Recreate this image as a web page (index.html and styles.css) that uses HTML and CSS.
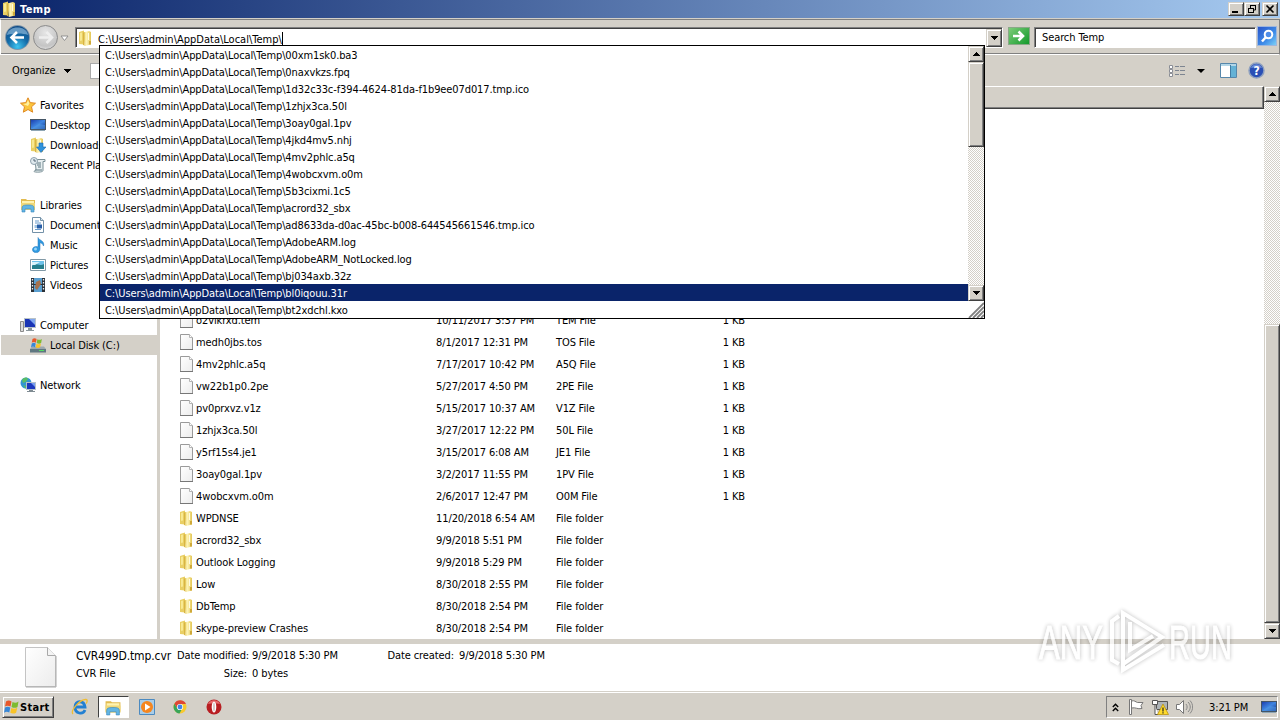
FILE: index.html
```html
<!DOCTYPE html>
<html lang="en">
<head>
    <meta charset="UTF-8">
    <meta name="viewport" content="width=device-width, initial-scale=1.0">
    <title>Temp</title>
    <link rel="stylesheet" href="styles.css">
</head>
<body>
    <!-- shared icons -->
    <svg class="sprite" width="0" height="0">
        <defs>
            <linearGradient id="gold" x1="0" x2="1"><stop offset="0" stop-color="#ecd467"/><stop offset=".45" stop-color="#fdf3b4"/><stop offset="1" stop-color="#e3c655"/></linearGradient>
            <linearGradient id="blue" x1="0" y1="0" x2="1" y2="1"><stop offset="0" stop-color="#1b3fb0"/><stop offset=".5" stop-color="#3f86e0"/><stop offset="1" stop-color="#0f2f8c"/></linearGradient>
            <linearGradient id="paper" x1="0" y1="0" x2="1" y2="1"><stop offset="0" stop-color="#fff"/><stop offset="1" stop-color="#ececec"/></linearGradient>
            <radialGradient id="navBlue" cx=".5" cy=".9" r=".9"><stop offset="0" stop-color="#3fc4f0"/><stop offset=".5" stop-color="#146ca8"/><stop offset="1" stop-color="#0f4a86"/></radialGradient>
            <radialGradient id="navGray" cx=".5" cy=".3" r=".8"><stop offset="0" stop-color="#e6e6e6"/><stop offset=".7" stop-color="#c4c4c4"/><stop offset="1" stop-color="#eee"/></radialGradient>
        </defs>
        <symbol id="folder" viewBox="0 0 16 16">
            <path d="M1 2l5-1.500v14L1 14z" fill="#e9cf64"/>
            <path d="M5 2.500l6-1.500 2 1v12.500L7 16z" fill="url(#gold)"/>
            <path d="M5 2.500l1.500-.5v14L5 14.500z" fill="#d9b541"/>
            <path d="M2 3l2-.5v8L2 11z" fill="#f8e992"/>
            <path d="M10 3h1v7h-1z" fill="#fffbe0"/>
            <path d="M11 11h2v3.500h-2z" fill="#cfa93a"/>
        </symbol>
        <symbol id="file" viewBox="0 0 16 16">
            <path d="M1.500.5h9l3 3v12h-12z" fill="url(#paper)" stroke="#9a9a9a"/>
            <path d="M10.500.5v3h3" fill="#fff" stroke="#b5b5b5"/>
            <path d="M1 15.500h13" stroke="#777"/>
        </symbol>
        <symbol id="monitor" viewBox="0 0 16 16">
            <path d="M0 2h16v11H0z" fill="#456"/>
            <path d="M1 3h14v9H1z" fill="url(#blue)"/>
            <path d="M1 12l8-5 6 1v4z" fill="#58a4ec" opacity=".5"/>
            <path d="M1 13h14v1H1z" fill="#8fa6b4"/>
        </symbol>
        <symbol id="libs" viewBox="0 0 16 16">
            <path d="M1 2h5l1 1h8v9H1z" fill="#e2bb50"/>
            <path d="M2 4h12v3H2z" fill="#fff3b0"/>
            <path d="M1 6h14v7H1z" fill="#f0d878"/>
            <path d="M2 15v-4c0-3 3-3 6-3s6 0 6 3v4h-3v-3H5v3z" fill="#62b5e4" stroke="#3987bd" stroke-width=".6"/>
        </symbol>
        <symbol id="flagwin" viewBox="0 0 16 16">
            <path d="M2 2.500c2-1.500 4-1 5.500 0L6.500 7.500c-2-1-4-1-5.500 0z" fill="#e8582a"/>
            <path d="M8.500 3c2 1 4 1 6-.5l-1 5.500c-2 1.300-4 1-6 0z" fill="#7dbb31"/>
            <path d="M1 8.500c2-1 3.500-1 5.300 0l-1 5c-2-1-3.500-1-5.300.2z" fill="#3787d6"/>
            <path d="M7.300 9c2 1 4 1 6-.3l-1.200 5c-2 1.200-4 1.200-5.800.1z" fill="#f8c327"/>
        </symbol>
        <symbol id="down" viewBox="0 0 7 4"><path d="M0 0h7v1H6v1H5v1H4v1H3V3H2V2H1V1H0z"/></symbol>
        <symbol id="up" viewBox="0 0 7 4"><path d="M3 0h1v1h1v1h1v1h1v1H0V3h1V2h1V1h1z"/></symbol>
    </svg>

    <header class="titlebar">
        <svg class="icon"><use href="#folder"/></svg>
        <h1>Temp</h1>
        <div class="winbtns">
            <span class="btn3d"><svg width="12" height="10" viewBox="0 0 12 10"><path d="M2 7h6v2H2z"/></svg></span>
            <span class="btn3d"><svg width="12" height="10" viewBox="0 0 12 10"><path d="M4 1.500h6M4.500 1v3M9.500 1v5H8M2 4.500h6M2.500 4v5M7.500 4v5M2 8.500h6" fill="none" stroke="#000"/><path d="M4 1h6v1H4zM2 4h6v1H2z"/></svg></span>
            <span class="btn3d close"><svg width="12" height="10" viewBox="0 0 12 10"><path d="M2.500 1.500l7 7M9.500 1.500l-7 7" stroke="#000" stroke-width="1.600"/></svg></span>
        </div>
    </header>

    <div class="addressbar">
        <svg class="navbtns" width="69" height="30" viewBox="0 0 69 30">
            <circle cx="17.500" cy="15.500" r="12.500" fill="#7f95a8"/>
            <circle cx="17.500" cy="15.500" r="11.500" fill="url(#navBlue)"/>
            <path d="M7 13c1-10 20-10 21 0-5-2-14-2-21 0z" fill="#9fc8e6" opacity=".6"/>
            <path d="M24 15.500H12M17 10l-5.500 5.500L17 21" fill="none" stroke="#fff" stroke-width="2.600"/>
            <circle cx="45.500" cy="15.500" r="12" fill="url(#navGray)" stroke="#8b8b8b"/>
            <path d="M39 15.500h12M46.500 10l5.500 5.500-5.500 5.500" fill="none" stroke="#eee" stroke-width="2.500"/>
            <path d="M61 14h7l-3.500 4.500z" fill="#fff" stroke="#888" stroke-width=".9"/>
        </svg>
        <div class="field address">
            <svg class="icon"><use href="#folder"/></svg>
            <span class="path">C:\Users\admin\AppData\Local\Temp\</span><i class="caret"></i>
            <span class="btn3d drop"><svg width="7" height="4"><use href="#down"/></svg></span>
        </div>
        <span class="go"><svg width="20" height="16" viewBox="0 0 20 16"><path d="M4 8h10M9.500 3.500L14 8l-4.500 4.500" fill="none" stroke="#fff" stroke-width="2.600"/></svg></span>
        <div class="field search">Search Temp</div>
        <span class="find"><svg width="18" height="18" viewBox="0 0 18 18"><circle cx="10.500" cy="7.500" r="3.800" fill="#4f8de8" stroke="#fff" stroke-width="2"/><path d="M8 10l-4 4.500" stroke="#fff" stroke-width="2.500"/></svg></span>
    </div>

    <div class="toolbar">
        <span>Organize</span>
        <svg class="arrow" width="7" height="4"><use href="#down"/></svg>
        <i class="openicon"></i>
        <div class="views">
            <svg width="16" height="14" viewBox="0 0 16 14"><path d="M.5 1.500h3v3h-3zM.5 5.500h3v3h-3zM.5 9.500h3v3h-3z" fill="#fff" stroke="#8b8e96"/><path d="M6 2.500h4M11 2.500h5M6 6.500h4M11 6.500h5M6 10.500h4M11 10.500h5" stroke="#7d8591"/></svg>
            <svg class="viewarrow" width="8" height="4"><use href="#down"/></svg>
            <svg class="preview" width="17" height="15" viewBox="0 0 17 15"><path d="M.5.5h16v14H.5z" fill="#fff" stroke="#5687ab"/><path d="M1 1h15v2H1z" fill="#b2d6e8"/><path d="M11 3h5v11h-5z" fill="#64b2d6"/><path d="M10.500 2v12" stroke="#427ca4"/></svg>
            <svg width="17" height="17" viewBox="0 0 17 17"><circle cx="8.500" cy="8.500" r="7.500" fill="#2a4fb5" stroke="#8ea0bf" stroke-width="1.500"/><path d="M3 6c2-5 9-5 11 0-4-1-7-1-11 0z" fill="#83a4e6" opacity=".7"/><text class="qmark" x="8.500" y="13" text-anchor="middle">?</text></svg>
        </div>
    </div>

    <main>
        <nav>
            <div class="nav-item top"><svg class="icon" viewBox="0 0 16 16"><path d="M8 .8l2.200 4.800 5.300.6-4 3.600 1.200 5.400L8 12.500l-4.700 2.700 1.200-5.400-4-3.600 5.300-.6z" fill="#fbc53c" stroke="#e08a24"/><path d="M8 3l1.400 3.500L8 9 3 7l3.500-.6z" fill="#fff0a0"/></svg>Favorites</div>
            <div class="nav-item"><svg class="icon"><use href="#monitor"/></svg>Desktop</div>
            <div class="nav-item"><svg class="icon" viewBox="0 0 16 16"><use href="#folder" width="16" height="16"/><path d="M9 6h4v4h3l-5 5.500L6.500 10H9z" fill="#2f92dc" stroke="#1b68b0" stroke-width=".6"/></svg>Downloads</div>
            <div class="nav-item"><svg class="icon" viewBox="0 0 16 16"><path d="M5 2.500h10v2h-2v9c0 2-8 2-9 1l2-2z" fill="#e6eef0" stroke="#7b9097"/><path d="M7 6h4M7 8h4M8 10h3M5 13h7" stroke="#5c7780"/><circle cx="4" cy="4" r="3.500" fill="#dfe9ee" stroke="#8fa1ac"/><path d="M4 2v2h2" stroke="#567" fill="none"/></svg>Recent Places</div>
            <div class="nav-item top group"><svg class="icon"><use href="#libs"/></svg>Libraries</div>
            <div class="nav-item"><svg class="icon" viewBox="0 0 16 16"><path d="M2.500.5h8l3 3v12h-11z" fill="#fff" stroke="#7391a8"/><path d="M10.500.5v3h3" fill="#d7e5ee" stroke="#7391a8"/><path d="M5 4h4M5 6h6M5 12.500h6" stroke="#6b9dcc"/><path d="M4.500 8h3v3h-3z" fill="#a2c4e0"/><path d="M7 7.500h5v4H7z" fill="#285fa8"/></svg>Documents</div>
            <div class="nav-item"><svg class="icon" viewBox="0 0 16 16"><path d="M8 .5c1 3 7 3 5.500 8.500-.5-2-2-3-3.500-3.300V12c0 5-8 4.500-7.500.3C3 9.500 6 9 8 10z" fill="#2f9ae0" stroke="#1d70b8" stroke-width=".5"/><circle cx="5.500" cy="12" r="1.500" fill="#95d4fa"/></svg>Music</div>
            <div class="nav-item"><svg class="icon" viewBox="0 0 16 16"><path d="M.5 2.500h15v11H.5z" fill="#fff" stroke="#8199a6"/><path d="M2 4h12v8H2z" fill="#6ec2ea"/><path d="M2 9c4-4 7 1 12-2v5H2z" fill="#257f8d"/><path d="M2 5h8l-5 3H2z" fill="#d8f2fb"/></svg>Pictures</div>
            <div class="nav-item"><svg class="icon" viewBox="0 0 16 16"><path d="M1 1h14v14H1z" fill="#2b3138"/><path d="M4 1h8v6H4zM4 8h8v7H4z" fill="#5a9fd0"/><path d="M6 5l4-2 1 4-4 6-2-2z" fill="#a6714c"/><path d="M2.500 2v12M13.500 2v12" stroke="#eee" stroke-width="1.300" stroke-dasharray="1.500 1.500"/></svg>Videos</div>
            <div class="nav-item top group"><svg class="icon" viewBox="0 0 16 16"><path d="M.5 4.500h3v10h-3z" fill="#dcdcdc" stroke="#8b8b8b"/><path d="M4 1h12v10H4z" fill="#b8c2c8"/><path d="M5 2h10v8H5z" fill="#1a35b5"/><path d="M9 2h6v6z" fill="#7fa6f0"/><path d="M8 11h4v2h2v1H6v-1h2z" fill="#8c979c"/></svg>Computer</div>
            <div class="nav-item selected"><svg class="icon" viewBox="0 0 16 16"><path d="M2 9.500h12l2 2.500v3H0v-3z" fill="#9da8ad"/><path d="M0 12h16v3.500H0z" fill="#5f7780"/><path d="M9 13h5v1H9z" fill="#52dd62"/><use href="#flagwin" x="1" y="0" width="12" height="12"/></svg>Local Disk (C:)</div>
            <div class="nav-item top group"><svg class="icon" viewBox="0 0 16 16"><circle cx="6" cy="6" r="5.500" fill="#3296d2"/><path d="M2 3c2-3 5-3 6-1L6 5 3 6zM3 8l3 1v3z" fill="#58bd68"/><path d="M6 5h10v8H6z" fill="#b4c1cb"/><path d="M7 6h8v6H7z" fill="#1c39bd"/><path d="M11 6h4v4z" fill="#769cf0"/><path d="M9 13h4v1h2v1H7v-1h2z" fill="#7f8b92"/></svg>Network</div>
        </nav>

        <section class="files">
            <div class="colhead"></div>
            <div class="list">
                <div class="row"><svg class="icon"><use href="#file"/></svg><span>o2vikrxd.tem</span><span>10/11/2017 3:37 PM</span><span>TEM File</span><span>1 KB</span></div>
                <div class="row"><svg class="icon"><use href="#file"/></svg><span>medh0jbs.tos</span><span>8/1/2017 12:31 PM</span><span>TOS File</span><span>1 KB</span></div>
                <div class="row"><svg class="icon"><use href="#file"/></svg><span>4mv2phlc.a5q</span><span>7/17/2017 10:42 PM</span><span>A5Q File</span><span>1 KB</span></div>
                <div class="row"><svg class="icon"><use href="#file"/></svg><span>vw22b1p0.2pe</span><span>5/27/2017 4:50 PM</span><span>2PE File</span><span>1 KB</span></div>
                <div class="row"><svg class="icon"><use href="#file"/></svg><span>pv0prxvz.v1z</span><span>5/15/2017 10:37 AM</span><span>V1Z File</span><span>1 KB</span></div>
                <div class="row"><svg class="icon"><use href="#file"/></svg><span>1zhjx3ca.50l</span><span>3/27/2017 12:22 PM</span><span>50L File</span><span>1 KB</span></div>
                <div class="row"><svg class="icon"><use href="#file"/></svg><span>y5rf15s4.je1</span><span>3/15/2017 6:08 AM</span><span>JE1 File</span><span>1 KB</span></div>
                <div class="row"><svg class="icon"><use href="#file"/></svg><span>3oay0gal.1pv</span><span>3/2/2017 11:55 PM</span><span>1PV File</span><span>1 KB</span></div>
                <div class="row"><svg class="icon"><use href="#file"/></svg><span>4wobcxvm.o0m</span><span>2/6/2017 12:47 PM</span><span>O0M File</span><span>1 KB</span></div>
                <div class="row"><svg class="icon"><use href="#folder"/></svg><span>WPDNSE</span><span>11/20/2018 6:54 AM</span><span>File folder</span></div>
                <div class="row"><svg class="icon"><use href="#folder"/></svg><span>acrord32_sbx</span><span>9/9/2018 5:51 PM</span><span>File folder</span></div>
                <div class="row"><svg class="icon"><use href="#folder"/></svg><span>Outlook Logging</span><span>9/9/2018 5:29 PM</span><span>File folder</span></div>
                <div class="row"><svg class="icon"><use href="#folder"/></svg><span>Low</span><span>8/30/2018 2:55 PM</span><span>File folder</span></div>
                <div class="row"><svg class="icon"><use href="#folder"/></svg><span>DbTemp</span><span>8/30/2018 2:54 PM</span><span>File folder</span></div>
                <div class="row"><svg class="icon"><use href="#folder"/></svg><span>skype-preview Crashes</span><span>8/30/2018 2:54 PM</span><span>File folder</span></div>
            </div>
        </section>

        <div class="scrollbar main-scroll">
            <span class="btn3d"><svg width="7" height="4"><use href="#up"/></svg></span>
            <span class="btn3d thumb"></span>
            <span class="btn3d"><svg width="7" height="4"><use href="#down"/></svg></span>
        </div>
    </main>

    <section class="details">
        <svg class="bigfile" width="32" height="41" viewBox="0 0 32 41"><path d="M.5.5h22l8 8v31H.5z" fill="url(#paper)" stroke="#c4c4c4"/><path d="M22.500.5v8h8" fill="#f4f4f4" stroke="#a9a9a9"/><path d="M1 40h30V9" fill="none" stroke="#aaa"/></svg>
        <div class="info name"><span class="filename">CVR499D.tmp.cvr</span><span>CVR File</span></div>
        <div class="info labels"><span>Date modified:</span><span>Size:</span></div>
        <div class="info values"><span>9/9/2018 5:30 PM</span><span>0 bytes</span></div>
        <div class="info created"><span>Date created:</span></div>
        <div class="info values"><span>9/9/2018 5:30 PM</span></div>
    </section>

    <footer class="taskbar">
        <span class="btn3d start"><svg width="16" height="16"><use href="#flagwin"/></svg>Start</span>
        <div class="quick">
            <span><svg width="18" height="18" viewBox="0 0 18 18"><path d="M14 12c-2 5-10 4-10-3s9-7 10 0H5" fill="none" stroke="#2380d2" stroke-width="2.800"/><path d="M2 16C-1 13 9 1 15 1.500c2 .3 1 3 0 4" fill="none" stroke="#f0bd32" stroke-width="1.300"/></svg></span>
            <span class="pressed"><svg width="18" height="17" viewBox="0 0 16 16"><use href="#libs" width="16" height="16"/></svg></span>
            <span><svg width="16" height="16" viewBox="0 0 16 16"><path d="M.5.5h15v15H.5z" fill="#a9cde8" stroke="#4c8ac0"/><circle cx="8" cy="8" r="6" fill="#f5861f"/><path d="M6 4.500l5.500 3.500L6 11.500z" fill="#fff"/></svg></span>
            <span><svg width="16" height="16" viewBox="0 0 16 16"><circle cx="8" cy="8" r="6.500" fill="#f8c92d"/><path d="M2.400 4.800A6.500 6.500 0 0 1 14 5H8L5 9z" fill="#df4736"/><path d="M2.400 4.800A6.500 6.500 0 0 0 7.500 14.500L10 10 5 9z" fill="#39a55a"/><circle cx="8" cy="8" r="3.100" fill="#fff"/><circle cx="8" cy="8" r="2.400" fill="#4284e8"/></svg></span>
            <span><svg width="16" height="16" viewBox="0 0 16 16"><circle cx="8" cy="8" r="7.500" fill="#b81e22"/><path d="M2 5c2-5 10-5 12 0-4-1-8-1-12 0z" fill="#e6696b"/><ellipse cx="8" cy="8" rx="2.300" ry="5.500" fill="#fff"/><ellipse cx="8" cy="8" rx=".7" ry="4.500" fill="#c8b0b0"/></svg></span>
        </div>
        <div class="tray">
            <svg class="chev" width="7" height="9" viewBox="0 0 7 9"><path d="M.8 4L3.500 1.300 6.200 4M.8 8l2.700-2.700L6.200 8" fill="none" stroke="#000" stroke-width="1.400"/></svg>
            <svg class="flag" width="16" height="16" viewBox="0 0 16 16"><path d="M1.500.5h2v15h-2z" fill="#fff" stroke="#777"/><path d="M3.500 2c3-1 4 1 6 1.500h5.500l-2 3 1 3c-5 1-6-1.500-10.500-.5z" fill="#fff" stroke="#777"/></svg>
            <svg class="net" width="17" height="16" viewBox="0 0 17 16"><path d="M4.500 2.500h11v8h-11z" fill="#aeb4b8" stroke="#555"/><path d="M.5 1.500h5v4h-5zM3 5.500v10h3" fill="#fff" stroke="#555"/><path d="M11 5l5.500 10.500h-11z" fill="#ffdb2b" stroke="#b58b00" stroke-width=".7"/><path d="M11 8.500v4M11 13.300v1.200" stroke="#222" stroke-width="1.200"/></svg>
            <svg class="vol" width="17" height="16" viewBox="0 0 17 16"><path d="M.5 5.500h3l4-4v13l-4-4h-3z" fill="#fff" stroke="#777"/><path d="M10 5c1.500 2 1.500 4 0 6M12 3c3 3 3 7 0 10M14 1.500c3.500 4 3.500 9 0 13" fill="none" stroke="#888"/></svg>
            <span class="clock">3:21 PM</span>
            <svg width="16" height="16"><use href="#monitor"/></svg>
        </div>
    </footer>

    <!-- address autocomplete -->
    <div class="suggest">
        <ul>
            <li>C:\Users\admin\AppData\Local\Temp\00xm1sk0.ba3</li>
            <li>C:\Users\admin\AppData\Local\Temp\0naxvkzs.fpq</li>
            <li>C:\Users\admin\AppData\Local\Temp\1d32c33c-f394-4624-81da-f1b9ee07d017.tmp.ico</li>
            <li>C:\Users\admin\AppData\Local\Temp\1zhjx3ca.50l</li>
            <li>C:\Users\admin\AppData\Local\Temp\3oay0gal.1pv</li>
            <li>C:\Users\admin\AppData\Local\Temp\4jkd4mv5.nhj</li>
            <li>C:\Users\admin\AppData\Local\Temp\4mv2phlc.a5q</li>
            <li>C:\Users\admin\AppData\Local\Temp\4wobcxvm.o0m</li>
            <li>C:\Users\admin\AppData\Local\Temp\5b3cixmi.1c5</li>
            <li>C:\Users\admin\AppData\Local\Temp\acrord32_sbx</li>
            <li>C:\Users\admin\AppData\Local\Temp\ad8633da-d0ac-45bc-b008-644545661546.tmp.ico</li>
            <li>C:\Users\admin\AppData\Local\Temp\AdobeARM.log</li>
            <li>C:\Users\admin\AppData\Local\Temp\AdobeARM_NotLocked.log</li>
            <li>C:\Users\admin\AppData\Local\Temp\bj034axb.32z</li>
            <li class="active">C:\Users\admin\AppData\Local\Temp\bl0iqouu.31r</li>
            <li>C:\Users\admin\AppData\Local\Temp\bt2xdchl.kxo</li>
        </ul>
        <div class="side">
            <div class="scrollbar">
                <span class="btn3d"><svg width="7" height="4"><use href="#up"/></svg></span>
                <span class="btn3d thumb"></span>
                <span class="btn3d"><svg width="7" height="4"><use href="#down"/></svg></span>
            </div>
            <svg class="grip" width="16" height="17" viewBox="0 0 16 17"><path d="M1 17L16 2M5 17L16 6M9 17l7-7M13 17l3-3" stroke="#808080" stroke-width="1.800"/></svg>
        </div>
    </div>

    <svg class="watermark" width="230" height="80" viewBox="0 0 230 80">
        <g class="mark">
            <text x="10" y="54" textLength="64" lengthAdjust="spacingAndGlyphs">ANY</text>
            <text x="140" y="54" textLength="63" lengthAdjust="spacingAndGlyphs">RUN</text>
            <path class="logo" d="M90 59l-7-4V16l7-5M94 62V8l39 24-39 27M101 17v28l23-14M94 59v6l41-25"/>
        </g>
    </svg>
</body>
</html>
```
FILE: styles.css
```css
* {
    box-sizing: border-box;
}

body {
    margin: 0;
    width: 1280px;
    height: 720px;
    overflow: hidden;
    display: flex;
    flex-direction: column;
    background-color: #d4d0c8;
    color: #000;
    font-family: "DejaVu Sans Condensed", "DejaVu Sans", sans-serif;
    font-stretch: condensed;
    font-size: 11px;
    letter-spacing: -0.1px;
    white-space: nowrap;
}

svg {
    display: block;
    flex-shrink: 0;
}

.sprite {
    position: absolute;
}

.icon {
    width: 16px;
    height: 16px;
}

.btn3d {
    display: flex;
    align-items: center;
    justify-content: center;
    flex-shrink: 0;
    background-color: #d4d0c8;
    border: 1px solid;
    border-color: #d4d0c8 #404040 #404040 #d4d0c8;
    box-shadow: inset 1px 1px #fff, inset -1px -1px #808080;
}

/* title bar */
.titlebar {
    display: flex;
    align-items: center;
    height: 18px;
    padding: 0 2px;
    background: linear-gradient(to right, #0a246a, #a6caf0);
}

.titlebar h1 {
    flex: 1;
    margin: 0 0 0 2px;
    color: #fff;
    font-size: 11px;
    letter-spacing: 0.4px;
}

.winbtns {
    display: flex;
}

.winbtns .btn3d {
    width: 16px;
    height: 14px;
}

.winbtns .close {
    margin-left: 2px;
}

/* address bar */
.addressbar {
    display: flex;
    align-items: flex-start;
    height: 36px;
    margin-top: 1px;
    padding: 7px 1px 0 0;
    border: 1px solid #808080;
    border-bottom-color: #fff;
    border-left-color: #fff;
    box-shadow: inset 0 -1px #808080;
}

.navbtns {
    margin: -5px 6px 0 -1px;
}

.field {
    display: flex;
    align-items: center;
    height: 21px;
    background-color: #fff;
    border: 1px solid;
    border-color: #808080 #fff #fff #808080;
    box-shadow: inset 1px 1px #404040;
}

.address {
    width: 928px;
    padding: 1px 0 0 2px;
}

.path {
    margin-left: 4px;
    padding-top: 2px;
    letter-spacing: 0;
}

.caret {
    width: 1px;
    height: 13px;
    background-color: #000;
}

.drop {
    width: 16px;
    height: 18px;
    margin-left: auto;
}

.go {
    margin: 0 4px 0 5px;
    border: 1px solid #8aa888;
    background: linear-gradient(135deg, #7ccc78, #149a2c);
}

.search {
    width: 222px;
    padding-left: 7px;
}

.find {
    margin: -1px 0 0 1px;
    background: linear-gradient(135deg, #2a55c8, #3e8be8 60%, #7cd0f6);
    border: 1px solid #9fb6dc;
}

/* toolbar */
.toolbar {
    display: flex;
    align-items: center;
    height: 31px;
    padding: 0 15px 0 12px;
}

.arrow {
    margin-left: 8px;
}

.openicon {
    width: 14px;
    height: 16px;
    margin-left: 19px;
    background-color: #fff;
    border: 1px solid #aaa;
}

.views {
    display: flex;
    align-items: center;
    margin-left: auto;
}

.viewarrow {
    margin-left: 12px;
}

.preview {
    margin: 0 11px 0 15px;
}

.qmark {
    fill: #fff;
    font-size: 12px;
    font-weight: bold;
}

/* content */
main {
    display: flex;
    height: 553px;
    background-color: #fff;
}

nav {
    width: 160px;
    padding: 9px 0 0 1px;
    border-right: 3px solid #d4d0c8;
}

.nav-item {
    display: flex;
    align-items: center;
    gap: 4px;
    height: 20px;
    padding-left: 29px;
}

.nav-item.top {
    padding-left: 19px;
}

.nav-item.group {
    margin-top: 20px;
}

.nav-item.selected {
    background-color: #d4d0c8;
}

.files {
    display: flex;
    flex-direction: column;
    width: 1104px;
}

.colhead {
    flex-shrink: 0;
    height: 23px;
    background-color: #d4d0c8;
    border: 1px solid;
    border-color: #fff #404040 #404040 #fff;
    box-shadow: inset -1px -1px #808080;
}

.list {
    display: flex;
    flex: 1;
    flex-direction: column;
    justify-content: flex-end;
}

.row {
    display: grid;
    grid-template-columns: 17px 240px 120px 90px 99px;
    align-items: center;
    height: 22px;
    padding-left: 19px;
}

.row .icon {
    margin-top: -1px;
}

.row span:last-child:nth-child(5) {
    text-align: right;
}

.scrollbar {
    display: flex;
    flex-direction: column;
    width: 16px;
    background: conic-gradient(#fff 25%, #d4d0c8 0 50%, #fff 0 75%, #d4d0c8 0) 0 0 / 2px 2px;
}

.scrollbar .btn3d {
    height: 16px;
}

.scrollbar .btn3d:last-child {
    margin-top: auto;
}

.main-scroll .btn3d.thumb {
    height: 299px;
    margin-top: 222px;
}

/* details pane */
.details {
    display: flex;
    height: 53px;
    padding: 3px 0 0 25px;
    background-color: #fff;
    border-top: 5px solid #d4d0c8;
}

.info {
    display: flex;
    flex-direction: column;
    line-height: 18px;
}

.name {
    width: 98px;
    margin-left: 19px;
}

.filename {
    font-size: 12px;
}

.labels {
    width: 70px;
    margin-left: 3px;
    text-align: right;
}

.values {
    width: 87px;
    margin-left: 5px;
}

.created {
    width: 67px;
    margin-left: 48px;
    text-align: right;
}

/* taskbar */
.taskbar {
    display: flex;
    align-items: center;
    height: 28px;
    padding: 1px 2px 0;
    border-top: 1px solid #fff;
    box-shadow: 0 -1px #d4d0c8;
}

.start {
    justify-content: flex-start;
    width: 52px;
    height: 22px;
    padding-left: 1px;
    font-weight: bold;
    letter-spacing: 0.3px;
}

.quick {
    display: flex;
    margin-left: 10px;
}

.quick span {
    display: flex;
    align-items: center;
    justify-content: center;
    width: 31px;
    height: 22px;
    margin-right: 2.6px;
}

.quick .pressed {
    background-color: #fff;
    border: 1px solid;
    border-color: #404040 #fff #fff #404040;
}

.tray {
    display: flex;
    align-items: center;
    width: 172px;
    height: 22px;
    margin-left: auto;
    padding-left: 5px;
    border: 1px solid;
    border-color: #808080 #fff #fff #808080;
}

.flag {
    margin-left: 9px;
}

.net {
    margin-left: 8px;
}

.vol {
    margin-left: 7px;
}

.clock {
    width: 52px;
    margin-left: 16px;
}

/* autocomplete list, over the page */
.suggest {
    position: absolute;
    left: 99px;
    top: 45px;
    display: flex;
    width: 886px;
    height: 274px;
    background-color: #fff;
    border: 1px solid #000;
}

.suggest ul {
    flex: 1;
    margin: 0;
    padding: 0;
    list-style: none;
}

.suggest li {
    height: 17px;
    padding-left: 5px;
    line-height: 19px;
}

.suggest .active {
    background-color: #0a246a;
    color: #fff;
}

.suggest .scrollbar {
    height: 255px;
}

.suggest .btn3d.thumb {
    height: 85px;
}

.watermark {
    position: absolute;
    left: 1029px;
    top: 605px;
    overflow: visible;
}

.mark {
    fill: #fff;
    stroke: #fff;
    stroke-width: 1px;
    opacity: 0.75;
    filter: drop-shadow(0 0 2px rgba(0, 0, 0, 0.35));
    font-family: "Liberation Sans", sans-serif;
    font-size: 49px;
    letter-spacing: 0;
}

.logo {
    fill: none;
    stroke-width: 4px;
}
```
